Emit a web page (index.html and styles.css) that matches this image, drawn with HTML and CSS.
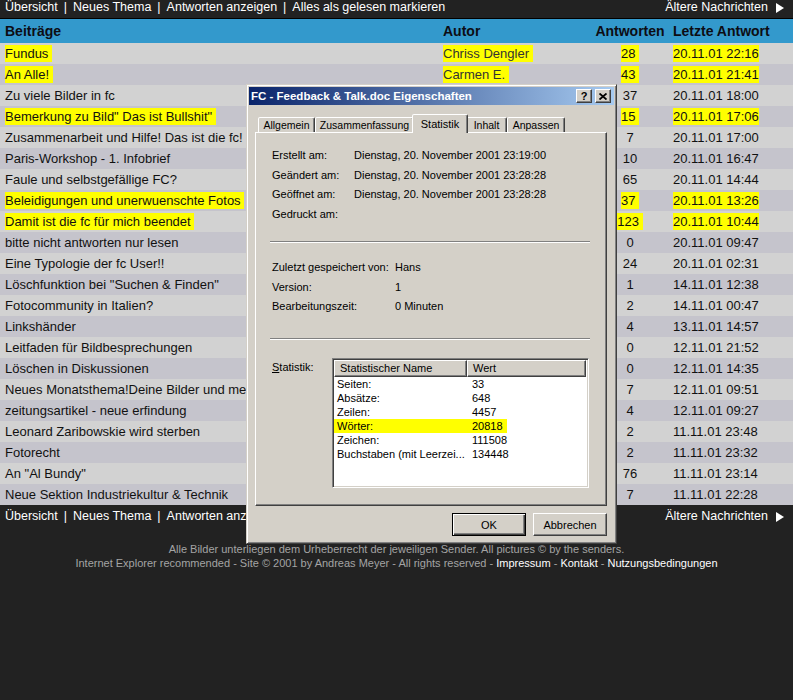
FILE: index.html
```html
<!DOCTYPE html>
<html lang="de">
<head>
<meta charset="utf-8">
<title>Forum – fotocommunity</title>
<link rel="stylesheet" href="styles.css">
</head>
<body>
<div class="nav nav-top">
  <div class="nav-links">
    <a href="#">Übersicht</a><span class="pipe">|</span><a href="#">Neues Thema</a><span class="pipe">|</span><a href="#">Antworten anzeigen</a><span class="pipe">|</span><a href="#">Alles als gelesen markieren</a>
  </div>
  <a class="older" href="#">Ältere Nachrichten<svg class="arrow" width="8" height="10" viewBox="0 0 8 10"><polygon points="0,0 8,5 0,10" fill="#fff"/></svg></a>
</div>

<table class="topics">
  <colgroup><col class="c-title"><col class="c-author"><col class="c-count"><col class="c-date"></colgroup>
  <thead>
    <tr><th>Beiträge</th><th>Autor</th><th class="count">Antworten</th><th class="date">Letzte Antwort</th></tr>
  </thead>
  <tbody>
    <tr><td><span class="hl">Fundus&nbsp;</span></td><td><span class="hl author">Chriss Dengler&nbsp;</span></td><td class="count"><span class="hl">28&nbsp;</span></td><td class="date"><span class="hl">20.11.01 22:16</span></td></tr>
    <tr><td><span class="hl">An Alle!&nbsp;</span></td><td><span class="hl author">Carmen E.&nbsp;</span></td><td class="count"><span class="hl">43&nbsp;</span></td><td class="date"><span class="hl">20.11.01 21:41</span></td></tr>
    <tr><td>Zu viele Bilder in fc</td><td class="author"></td><td class="count">37</td><td class="date">20.11.01 18:00</td></tr>
    <tr><td><span class="hl">Bemerkung zu Bild" Das ist Bullshit"&nbsp;</span></td><td class="author"></td><td class="count"><span class="hl">15&nbsp;</span></td><td class="date"><span class="hl">20.11.01 17:06</span></td></tr>
    <tr><td>Zusammenarbeit und Hilfe! Das ist die fc!</td><td class="author"></td><td class="count">7</td><td class="date">20.11.01 17:00</td></tr>
    <tr><td>Paris-Workshop - 1. Infobrief</td><td class="author"></td><td class="count">10</td><td class="date">20.11.01 16:47</td></tr>
    <tr><td>Faule und selbstgefällige FC?</td><td class="author"></td><td class="count">65</td><td class="date">20.11.01 14:44</td></tr>
    <tr><td><span class="hl">Beleidigungen und unerwuenschte Fotos&nbsp;</span></td><td class="author"></td><td class="count"><span class="hl">37&nbsp;</span></td><td class="date"><span class="hl">20.11.01 13:26</span></td></tr>
    <tr><td><span class="hl">Damit ist die fc für mich beendet&nbsp;</span></td><td class="author"></td><td class="count"><span class="hl">123&nbsp;</span></td><td class="date"><span class="hl">20.11.01 10:44</span></td></tr>
    <tr><td>bitte nicht antworten nur lesen</td><td class="author"></td><td class="count">0</td><td class="date">20.11.01 09:47</td></tr>
    <tr><td>Eine Typologie der fc User!!</td><td class="author"></td><td class="count">24</td><td class="date">20.11.01 02:31</td></tr>
    <tr><td>Löschfunktion bei "Suchen &amp; Finden"</td><td class="author"></td><td class="count">1</td><td class="date">14.11.01 12:38</td></tr>
    <tr><td>Fotocommunity in Italien?</td><td class="author"></td><td class="count">2</td><td class="date">14.11.01 00:47</td></tr>
    <tr><td>Linkshänder</td><td class="author"></td><td class="count">4</td><td class="date">13.11.01 14:57</td></tr>
    <tr><td>Leitfaden für Bildbesprechungen</td><td class="author"></td><td class="count">0</td><td class="date">12.11.01 21:52</td></tr>
    <tr><td>Löschen in Diskussionen</td><td class="author"></td><td class="count">0</td><td class="date">12.11.01 14:35</td></tr>
    <tr><td>Neues Monatsthema!Deine Bilder und mei</td><td class="author"></td><td class="count">7</td><td class="date">12.11.01 09:51</td></tr>
    <tr><td>zeitungsartikel - neue erfindung</td><td class="author"></td><td class="count">4</td><td class="date">12.11.01 09:27</td></tr>
    <tr><td>Leonard Zaribowskie wird sterben</td><td class="author"></td><td class="count">2</td><td class="date">11.11.01 23:48</td></tr>
    <tr><td>Fotorecht</td><td class="author"></td><td class="count">2</td><td class="date">11.11.01 23:32</td></tr>
    <tr><td>An "Al Bundy"</td><td class="author"></td><td class="count">76</td><td class="date">11.11.01 23:14</td></tr>
    <tr><td>Neue Sektion Industriekultur &amp; Technik</td><td class="author"></td><td class="count">7</td><td class="date">11.11.01 22:28</td></tr>
  </tbody>
</table>

<div class="nav nav-bottom">
  <div class="nav-links">
    <a href="#">Übersicht</a><span class="pipe">|</span><a href="#">Neues Thema</a><span class="pipe">|</span><a href="#">Antworten anze</a>
  </div>
  <a class="older" href="#">Ältere Nachrichten<svg class="arrow" width="8" height="10" viewBox="0 0 8 10"><polygon points="0,0 8,5 0,10" fill="#fff"/></svg></a>
</div>

<div class="footer">
  <p>Alle Bilder unterliegen dem Urheberrecht der jeweiligen Sender. All pictures © by the senders.</p>
  <p>Internet Explorer recommended - Site © 2001 by Andreas Meyer - All rights reserved - <a href="#">Impressum</a> - <a href="#">Kontakt</a> - <a href="#">Nutzungsbedingungen</a></p>
</div>

<div class="dialog">
  <div class="titlebar">
    <span class="title">FC - Feedback &amp; Talk.doc Eigenschaften</span>
    <span class="tbtns">
      <span class="tbtn">?</span>
      <span class="tbtn"><svg width="8" height="7" viewBox="0 0 8 7"><path d="M0.5 0.5 L7.5 6.5 M7.5 0.5 L0.5 6.5" stroke="#000" stroke-width="1.8" fill="none"/></svg></span>
    </span>
  </div>
  <div class="tabs">
    <span class="tab t-allg">Allgemein</span>
    <span class="tab t-zus">Zusammenfassung</span>
    <span class="tab t-stat active">Statistik</span>
    <span class="tab t-inh">Inhalt</span>
    <span class="tab t-anp">Anpassen</span>
  </div>
  <div class="panel">
    <div class="props g1">
      <span>Erstellt am:</span><span>Dienstag, 20. November 2001 23:19:00</span>
      <span>Geändert am:</span><span>Dienstag, 20. November 2001 23:28:28</span>
      <span>Geöffnet am:</span><span>Dienstag, 20. November 2001 23:28:28</span>
      <span>Gedruckt am:</span><span></span>
    </div>
    <div class="hsep s1"></div>
    <div class="props g2">
      <span>Zuletzt gespeichert von:</span><span>Hans</span>
      <span>Version:</span><span>1</span>
      <span>Bearbeitungszeit:</span><span>0 Minuten</span>
    </div>
    <div class="hsep s2"></div>
    <div class="statrow">
      <span class="statlabel"><u>S</u>tatistik:</span>
      <div class="listbox">
        <div class="lhead"><span class="lh-name">Statistischer Name</span><span class="lh-val">Wert</span></div>
        <div class="lrow"><span class="ln">Seiten:</span><span class="lv">33</span></div>
        <div class="lrow"><span class="ln">Absätze:</span><span class="lv">648</span></div>
        <div class="lrow"><span class="ln">Zeilen:</span><span class="lv">4457</span></div>
        <div class="lrow mark"><span class="ln">Wörter:</span><span class="lv">20818</span></div>
        <div class="lrow"><span class="ln">Zeichen:</span><span class="lv">111508</span></div>
        <div class="lrow"><span class="ln">Buchstaben (mit Leerzei...</span><span class="lv">134448</span></div>
      </div>
    </div>
  </div>
  <div class="btns">
    <button class="btn default">OK</button>
    <button class="btn">Abbrechen</button>
  </div>
</div>
</body>
</html>
```
FILE: styles.css
```css
html, body {
  margin: 0;
  padding: 0;
}

body {
  background: #222222;
  font-family: "Liberation Sans", Arial, sans-serif;
  font-size: 13px;
  color: #ffffff;
  position: relative;
  min-height: 700px;
}

a {
  color: inherit;
  text-decoration: none;
}

/* navigation bars */
.nav {
  display: flex;
  justify-content: space-between;
  align-items: center;
  line-height: 15px;
  font-size: 12.5px;
  padding: 0 9px 0 5px;
}

.nav-top {
  padding-bottom: 3px;
  border-bottom: 1px solid #000;
}

.nav-bottom {
  padding-top: 4px;
  padding-bottom: 3px;
}

.pipe {
  margin: 0 6px;
}

.older {
  display: flex;
  align-items: center;
}

.arrow {
  margin-left: 8px;
}

/* topic table */
.topics {
  width: 100%;
  border-collapse: collapse;
  table-layout: fixed;
  color: #111;
}

.c-title { width: 438px; }
.c-author { width: 152px; }
.c-count { width: 80px; }

.topics th {
  background: #3399cc;
  height: 24px;
  padding: 0 0 0 5px;
  font-size: 14px;
  font-weight: bold;
  text-align: left;
  color: #0d0d14;
  white-space: nowrap;
}

.topics td {
  height: 21px;
  padding: 0 0 0 5px;
  line-height: 15px;
  white-space: nowrap;
  overflow: hidden;
}

.topics tbody tr:nth-child(odd) td { background: #d2d2d2; }
.topics tbody tr:nth-child(even) td { background: #c5c4cc; }

.topics .count {
  text-align: center;
  padding-left: 0;
}

.topics .date {
  padding-left: 3px;
}

.topics .author {
  color: #333;
}

.hl {
  background: #ffff00;
  padding: 1px 0;
}

/* footer */
.footer {
  padding-top: 15px;
  text-align: center;
  font-size: 11px;
  line-height: 14px;
  color: #a4a4a4;
}

.footer p {
  margin: 0;
}

.footer a {
  color: #ffffff;
}

/* Windows 2000 property dialog */
.dialog {
  position: absolute;
  left: 246px;
  top: 84px;
  width: 371px;
  height: 460px;
  box-sizing: border-box;
  background: #d4d0c8;
  border: 1px solid;
  border-color: #d4d0c8 #404040 #404040 #d4d0c8;
  box-shadow: inset 1px 1px #ffffff, inset -1px -1px #808080;
  padding: 2px;
  display: flex;
  flex-direction: column;
  font-family: "Liberation Sans", Arial, sans-serif;
  font-size: 11px;
  color: #000;
}

.titlebar {
  height: 18px;
  flex-shrink: 0;
  display: flex;
  align-items: center;
  justify-content: space-between;
  padding: 0 3px 0 2px;
  background: linear-gradient(to right, #0a246a, #a6caf0);
  color: #fff;
  font-weight: bold;
  font-size: 11.5px;
  white-space: nowrap;
}

.tbtns {
  display: flex;
  gap: 3px;
}

.tbtn {
  width: 16px;
  height: 14px;
  box-sizing: border-box;
  display: flex;
  align-items: center;
  justify-content: center;
  background: #d4d0c8;
  border: 1px solid;
  border-color: #ffffff #404040 #404040 #ffffff;
  box-shadow: inset -1px -1px #808080;
  color: #000;
  font-size: 11px;
  font-weight: bold;
  line-height: 12px;
}

.tabs {
  display: flex;
  align-items: flex-end;
  height: 19px;
  margin: 9px 0 -1px 9px;
  position: relative;
  z-index: 1;
  flex-shrink: 0;
}

.tab {
  height: 15px;
  margin-bottom: 1px;
  box-sizing: border-box;
  padding: 0;
  text-align: center;
  border: 1px solid;
  border-bottom: none;
  border-color: #ffffff #404040 transparent #ffffff;
  border-radius: 2px 2px 0 0;
  box-shadow: inset -1px 0 #808080;
  background: #d4d0c8;
  line-height: 14px;
  font-size: 10.5px;
  white-space: nowrap;
}

.t-allg { width: 57px; }
.t-zus { width: 99px; }
.t-stat { width: 56px; }
.t-inh { width: 41px; }
.t-anp { width: 58px; }

.tab.active {
  height: 19px;
  margin: 0 -2px;
  padding-top: 2px;
  font-size: 11px;
  position: relative;
  z-index: 2;
}

.panel {
  height: 374px;
  flex-shrink: 0;
  box-sizing: border-box;
  margin: 0 7px 0 6px;
  border: 1px solid;
  border-color: #ffffff #404040 #404040 #ffffff;
  box-shadow: inset -1px -1px #808080;
  padding-top: 13px;
}

.props {
  display: grid;
  line-height: 19.7px;
  padding-left: 16px;
  white-space: nowrap;
}

.props.g1 { grid-template-columns: 82px 1fr; }
.props.g2 { grid-template-columns: 123px 1fr; margin-top: 15px; }

.hsep {
  height: 0;
  border-top: 1px solid #808080;
  border-bottom: 1px solid #ffffff;
  margin: 16px 16px 0 14px;
}

.hsep.s2 { margin-top: 21px; }

.statrow {
  display: flex;
  align-items: flex-start;
  margin-top: 18px;
  padding-left: 16px;
}

.statlabel {
  width: 60px;
  line-height: 14px;
  margin-top: 2px;
}

.listbox {
  width: 257px;
  height: 130px;
  box-sizing: border-box;
  background: #ffffff;
  border: 1px solid;
  border-color: #808080 #ffffff #ffffff #808080;
  box-shadow: inset 1px 1px #404040, inset -1px -1px #d4d0c8;
  padding: 1px;
}

.lhead {
  display: flex;
  height: 17px;
}

.lhead span {
  box-sizing: border-box;
  height: 17px;
  background: #d4d0c8;
  border: 1px solid;
  border-color: #ffffff #404040 #404040 #ffffff;
  box-shadow: inset -1px -1px #808080;
  padding-left: 5px;
  line-height: 14px;
}

.lh-name { width: 133px; }
.lh-val { width: 119px; }

.lrow {
  display: flex;
  height: 14px;
  line-height: 14px;
  white-space: nowrap;
}

.lrow .ln {
  width: 130px;
  padding-left: 3px;
}

.lrow .lv {
  padding-left: 5px;
}

.lrow.mark {
  width: 173px;
  background: #ffff00;
}

.btns {
  display: flex;
  justify-content: flex-end;
  gap: 7px;
  margin: 7px 7px 0 0;
}

.btn {
  width: 74px;
  height: 23px;
  box-sizing: border-box;
  padding: 0;
  background: #d4d0c8;
  border: 1px solid;
  border-color: #ffffff #404040 #404040 #ffffff;
  box-shadow: inset -1px -1px #808080;
  font-family: "Liberation Sans", Arial, sans-serif;
  font-size: 11px;
  color: #000;
}

.btn.default {
  border: 1px solid #000;
  box-shadow: inset 1px 1px #ffffff, inset -1px -1px #404040, inset -2px -2px #808080;
}
```
